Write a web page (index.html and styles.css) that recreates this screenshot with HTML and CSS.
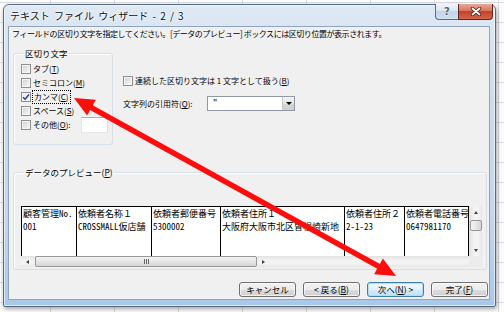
FILE: index.html
```html
<!DOCTYPE html>
<html lang="ja">

<head>
    <meta charset="UTF-8">
    <title>テキスト ファイル ウィザード - 2 / 3</title>
    <link rel="stylesheet" href="styles.css">
</head>

<body>
    <div class="window">
        <div class="titlebar">
            <span class="title">テキスト ファイル ウィザード - 2 / 3</span>
            <div class="caption-btns">
                <button class="cap-help" type="button">?</button>
                <button class="cap-close" type="button">
                    <svg width="12" height="9" viewBox="0 0 12 9">
                        <path d="M2.5 1.5 L9.5 7.5 M9.5 1.5 L2.5 7.5" stroke="#5b1a10" stroke-width="3.4" stroke-linecap="round" />
                        <path d="M2.5 1.5 L9.5 7.5 M9.5 1.5 L2.5 7.5" stroke="#fff" stroke-width="1.8" stroke-linecap="round" />
                    </svg>
                </button>
            </div>
        </div>

        <div class="client">
            <p class="intro">フィールドの区切り文字を指定してください。[データのプレビュー] ボックスには区切り位置が表示されます。</p>

            <div class="options">
                <fieldset class="group delims">
                    <legend>区切り文字</legend>
                    <label class="check"><span class="box"></span>タブ(<u>T</u>)</label>
                    <label class="check"><span class="box"></span>セミコロン(<u>M</u>)</label>
                    <label class="check">
                        <span class="box checked">
                            <svg width="8" height="8" viewBox="0 0 8 8"><path d="M1 4.2 L3.1 6.3 L7 1.5" fill="none" stroke="#21418a" stroke-width="1.4" /></svg>
                        </span>
                        <span class="focus">カンマ(<u>C</u>)</span>
                    </label>
                    <label class="check"><span class="box"></span>スペース(<u>S</u>)</label>
                    <label class="check"><span class="box"></span>その他(<u>O</u>):<span class="textbox"></span></label>
                </fieldset>

                <div class="opts-right">
                    <label class="check"><span class="box"></span>連続した区切り文字は 1 文字として扱う(<u>B</u>)</label>
                    <div class="quote-row">
                        <span class="quote-label">文字列の引用符(<u>Q</u>):</span>
                        <div class="combo">
                            <span class="combo-value">"</span>
                            <span class="combo-btn"><span class="tri-down"></span></span>
                        </div>
                    </div>
                </div>
            </div>

            <fieldset class="group preview">
                <legend>データのプレビュー(<u>P</u>)</legend>
                <div class="pv">
                    <div class="pv-cols">
                        <div class="pv-col c1"><div>顧客管理No.</div><div>001</div></div>
                        <div class="pv-col c2"><div>依頼者名称１</div><div>CROSSMALL仮店舗</div></div>
                        <div class="pv-col c3"><div>依頼者郵便番号</div><div>5300002</div></div>
                        <div class="pv-col c4"><div>依頼者住所１</div><div>大阪府大阪市北区曽根崎新地</div></div>
                        <div class="pv-col c5"><div>依頼者住所２</div><div>2-1-23</div></div>
                        <div class="pv-col c6"><div>依頼者電話番号</div><div>0647981170</div></div>
                    </div>
                    <div class="vscroll">
                        <span class="sb-arrow"><span class="tri-up"></span></span>
                        <span class="vthumb"></span>
                        <span class="sb-arrow end"><span class="tri-down small"></span></span>
                    </div>
                    <div class="hscroll">
                        <span class="sb-arrow h"><span class="tri-left"></span></span>
                        <span class="hthumb"><span class="grip"></span></span>
                        <span class="sb-arrow h end"><span class="tri-right"></span></span>
                    </div>
                    <div class="corner"></div>
                </div>
            </fieldset>

            <div class="buttons">
                <button class="btn" type="button">キャンセル</button>
                <button class="btn" type="button">&lt; 戻る(<u>B</u>)</button>
                <button class="btn default" type="button">次へ(<u>N</u>) &gt;</button>
                <button class="btn" type="button">完了(<u>F</u>)</button>
            </div>
        </div>
    </div>

    <svg class="annotation" width="504" height="312" viewBox="0 0 504 312">
        <line x1="90" y1="106.8" x2="380" y2="267.2" stroke="#ff0d0d" stroke-width="5.5" />
        <polygon points="74,98 87.1,115.6 95.9,99.8" fill="#ff0d0d" />
        <polygon points="396,276 374.1,274.2 382.9,258.4" fill="#ff0d0d" />
    </svg>
</body>

</html>
```

FILE: styles.css
```css
* {
    box-sizing: border-box;
}

body {
    margin: 0;
    width: 504px;
    height: 312px;
    padding: 4px 0 0 3px;
    overflow: hidden;
    position: relative;
    font-family: "Noto Sans CJK JP", sans-serif;
    background-color: #fbfbfb;
    background-image:
        linear-gradient(#d8dbdf 1px, transparent 1px),
        linear-gradient(90deg, #d8dbdf 1px, transparent 1px);
    background-size: 100% 20px, 64px 100%;
    background-position: 0 2px, 50px 0;
}

/* window frame */
.window {
    width: 493px;
    height: 303px;
    border: 1px solid #566a86;
    border-radius: 6px 6px 2px 2px;
    background: linear-gradient(to bottom, #dfe9f4 0%, #cddced 30%, #c3d6eb 70%, #a9c8ea 100%);
    padding: 0 5px 6px 4px;
    display: flex;
    flex-direction: column;
    box-shadow: 1px 2px 4px rgba(0, 0, 0, 0.35), inset 0 0 0 1px rgba(255, 255, 255, 0.55);
}

.titlebar {
    height: 21px;
    display: flex;
    align-items: flex-start;
}

.title {
    font-size: 10px;
    line-height: 12px;
    margin-top: 5px;
    padding-left: 2px;
    color: #111;
    text-shadow: 0 0 4px #fff, 0 0 2px #fff;
    white-space: nowrap;
    word-spacing: 2px;
}

.caption-btns {
    display: flex;
    margin-left: auto;
    margin-right: -3px;
    margin-top: -1px;
}

.cap-help {
    width: 23px;
    height: 16px;
    padding: 0;
    border: 1px solid #5b6d86;
    border-top: none;
    border-right: none;
    border-radius: 0 0 0 4px;
    background: linear-gradient(#f1f5fa, #dbe5f0 45%, #c3d4e7 50%, #d1dfef);
    font: bold 10px "DejaVu Sans", sans-serif;
    line-height: 14px;
    color: #56657a;
    text-shadow: 0 0 2px #fff;
}

.cap-close {
    width: 35px;
    height: 16px;
    padding: 0;
    border: 1px solid #5a2a22;
    border-top: none;
    border-radius: 0 0 4px 0;
    background: linear-gradient(#e9a897, #d8745f 45%, #c4412b 50%, #d5644c);
    display: flex;
    align-items: center;
    justify-content: center;
}

/* client area */
.client {
    flex: 1;
    background: #f0f0f0;
    border: 1px solid #8fa4be;
    display: flex;
    flex-direction: column;
    font-size: 8px;
    color: #000;
}

.intro {
    margin: 1px 0 0 3px;
    line-height: 12px;
    white-space: nowrap;
    letter-spacing: -0.45px;
}

.options {
    display: flex;
    margin-top: 7px;
}

.group {
    margin: 0;
    min-width: 0;
    border: 1px solid #d5dfe5;
    border-radius: 3px;
    box-shadow: inset 1px 1px 0 #fff;
}

.group legend {
    margin-left: 3px;
    padding: 0 1px;
    line-height: 12px;
    font-size: 8.5px;
}

.delims {
    margin-left: 4px;
    width: 100px;
    height: 98px;
    padding: 3px 0 0 7px;
}

.check {
    display: flex;
    align-items: center;
    height: 14px;
    line-height: 12px;
    white-space: nowrap;
}

.box {
    width: 10px;
    height: 10px;
    margin-right: 2px;
    flex-shrink: 0;
    border: 1px solid #8e8f8f;
    background: linear-gradient(135deg, #cfcfcf, #eeeeee 70%, #f8f8f8);
    box-shadow: inset 0 0 0 1px #f4f4f4;
    display: flex;
    align-items: center;
    justify-content: center;
}

.box.checked {
    background: linear-gradient(135deg, #e8e8e8, #fbfbfb);
}

.focus {
    border: 1px dotted #000;
    padding: 0 1px;
    margin-left: -1px;
    line-height: 12px;
}

.textbox {
    width: 27px;
    height: 16px;
    margin-left: auto;
    margin-right: 4px;
    flex-shrink: 0;
    background: #fff;
    border: 1px solid #abadb3;
    border-color: #abadb3 #dbdfe6 #e3e9ef #e2e3ea;
}

.opts-right {
    margin-left: 10px;
    padding-top: 27px;
}

.quote-row {
    display: flex;
    align-items: center;
    height: 15px;
    margin-top: 8px;
}

.quote-label {
    width: 84px;
    white-space: nowrap;
}

.combo {
    width: 88px;
    height: 15px;
    display: flex;
    background: #fff;
    border: 1px solid #8f98a3;
}

.combo-value {
    flex: 1;
    padding-left: 5px;
    font-size: 9px;
    line-height: 13px;
}

.combo-btn {
    width: 12px;
    border-left: 1px solid #c8c8c8;
    background: linear-gradient(#f4f4f4, #e3e3e3 50%, #d8d8d8 51%, #cfcfcf);
    display: flex;
    align-items: center;
    justify-content: center;
}

.tri-down {
    width: 0;
    height: 0;
    border-left: 3px solid transparent;
    border-right: 3px solid transparent;
    border-top: 3px solid #000;
}

.tri-down.small {
    border-left-width: 2px;
    border-right-width: 2px;
    border-top: 3px solid #444;
}

.tri-up {
    width: 0;
    height: 0;
    border-left: 2px solid transparent;
    border-right: 2px solid transparent;
    border-bottom: 3px solid #444;
}

.tri-left {
    width: 0;
    height: 0;
    border-top: 2px solid transparent;
    border-bottom: 2px solid transparent;
    border-right: 3px solid #444;
}

.tri-right {
    width: 0;
    height: 0;
    border-top: 2px solid transparent;
    border-bottom: 2px solid transparent;
    border-left: 3px solid #444;
}

/* data preview */
.preview {
    margin: 21px 0 0 4px;
    width: 474px;
    padding: 28px 4px 2px 7px;
}

.pv {
    display: grid;
    grid-template-columns: 448px 13px;
    grid-template-rows: 50px 11px;
}

.pv-cols {
    display: flex;
    background: #fff;
    border-top: 1px solid #000;
    overflow: hidden;
}

.pv-col {
    border-left: 1px solid #000;
    padding-left: 1px;
    font-family: "Noto Sans Mono CJK JP", "Noto Sans CJK JP", monospace;
    font-size: 9px;
    line-height: 13px;
    white-space: nowrap;
    overflow: hidden;
    flex-shrink: 0;
}

.c1 { width: 55px; }
.c2 { width: 75px; }
.c3 { width: 69px; }
.c4 { width: 124px; }
.c5 { width: 60px; }
.c6 { width: 65px; border-right: 1px solid #000; }

.vscroll {
    display: flex;
    flex-direction: column;
    background: linear-gradient(to right, #e2e2e2, #f3f3f3 40%, #f3f3f3 70%, #e6e6e6);
}

.sb-arrow {
    height: 12px;
    display: flex;
    align-items: center;
    justify-content: center;
    flex-shrink: 0;
}

.sb-arrow.end {
    margin-top: auto;
}

.vthumb {
    height: 11px;
    margin: 2px 0 0 1px;
    border: 1px solid #979797;
    border-radius: 2px;
    background: linear-gradient(to right, #f3f3f3, #e6e6e6 50%, #d6d6d6);
}

.hscroll {
    display: flex;
    align-items: center;
    background: linear-gradient(#e2e2e2, #f3f3f3 40%, #f3f3f3 70%, #e6e6e6);
}

.sb-arrow.h {
    width: 13px;
    height: 11px;
}

.hthumb {
    width: 222px;
    height: 11px;
    margin-left: 1px;
    border: 1px solid #979797;
    border-radius: 2px;
    background: linear-gradient(#f3f3f3, #e6e6e6 50%, #d6d6d6);
    display: flex;
    align-items: center;
    justify-content: center;
}

.grip {
    width: 5px;
    height: 5px;
    background: repeating-linear-gradient(90deg, #666 0 1px, transparent 1px 2px);
}

.corner {
    background: #ececec;
}

/* dialog buttons */
.buttons {
    display: flex;
    justify-content: flex-end;
    gap: 7px;
    margin-top: 12px;
    padding-right: 1px;
}

.btn {
    width: 57px;
    height: 15px;
    padding: 0;
    border: 1px solid #707070;
    border-radius: 3px;
    background: linear-gradient(#f2f2f2, #ebebeb 50%, #dddddd 51%, #cfcfcf);
    box-shadow: inset 0 0 0 1px rgba(255, 255, 255, 0.7);
    font-family: "Noto Sans CJK JP", sans-serif;
    font-size: 8.5px;
    line-height: 13px;
    color: #000;
}

.btn.default {
    border-color: #3c7fb1;
    background: linear-gradient(#f1f8fd, #e3f1fb 50%, #d3eaf9 51%, #c4e1f5);
    box-shadow: inset 0 0 0 1px #b4dcf4;
}

/* red annotation arrow drawn over the dialog */
.annotation {
    position: absolute;
    left: 0;
    top: 0;
    pointer-events: none;
}
```
